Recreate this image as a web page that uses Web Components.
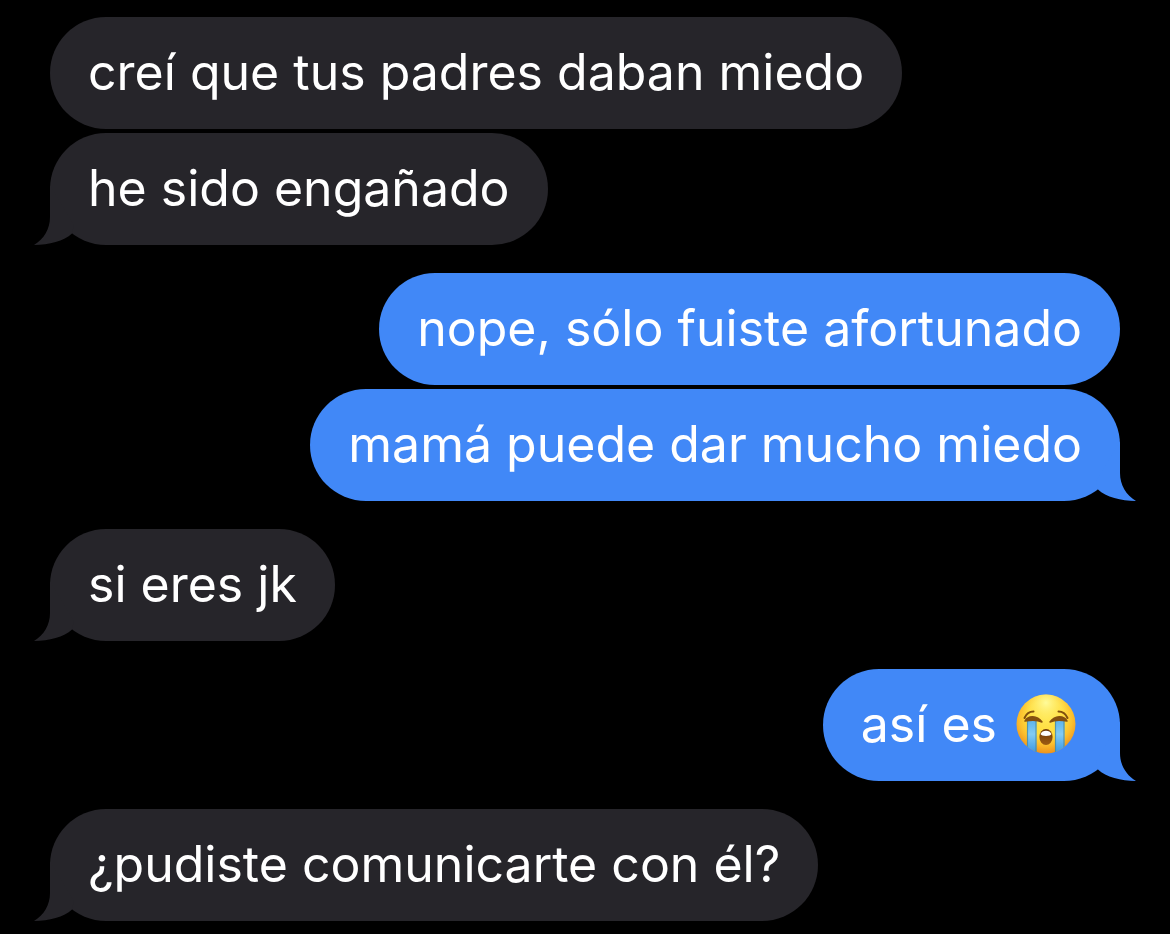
<!DOCTYPE html>
<html lang="es">
<head>
<meta charset="utf-8">
<meta name="viewport" content="width=device-width, initial-scale=1">
<title>Mensajes</title>
<style>
  body { margin: 0; background: #000; color: #fff; font-family: Inter, "Liberation Sans", sans-serif; }
</style>
</head>
<body>
<chat-thread>
  <message-group from="them">
    <message-bubble>creí que tus padres daban miedo</message-bubble>
    <message-bubble tail>he sido engañado</message-bubble>
  </message-group>
  <message-group from="me">
    <message-bubble>nope, sólo fuiste afortunado</message-bubble>
    <message-bubble tail>mamá puede dar mucho miedo</message-bubble>
  </message-group>
  <message-group from="them">
    <message-bubble tail>si eres jk</message-bubble>
  </message-group>
  <message-group from="me">
    <message-bubble tail>así es <crying-emoji></crying-emoji></message-bubble>
  </message-group>
  <message-group from="them">
    <message-bubble tail>¿pudiste comunicarte con él?</message-bubble>
  </message-group>
</chat-thread>

<template id="thread-template">
  <style>
    :host { display: block; }
    main { display: flex; flex-direction: column; gap: 28px; padding: 17px 50px 13px; }
  </style>
  <main><slot></slot></main>
</template>

<template id="group-template">
  <style>
    :host { display: flex; flex-direction: column; align-items: flex-start; gap: 4px; --bubble: #26252a; --flip: 1; --tail-left: -16px; --tail-right: auto; }
    :host([from="me"]) { align-items: flex-end; --bubble: #4188f7; --flip: -1; --tail-left: auto; --tail-right: -16px; }
  </style>
  <slot></slot>
</template>

<template id="bubble-template">
  <style>
    :host { display: block; position: relative; box-sizing: border-box; max-width: 100%; padding: 23px 38px 25px; border-radius: 56px; background: var(--bubble); font-size: 50px; line-height: 64px; }
    svg { display: none; position: absolute; bottom: 0; left: var(--tail-left); right: var(--tail-right); transform: scaleX(var(--flip)); fill: var(--bubble); }
    :host([tail]) svg { display: block; }
  </style>
  <slot></slot>
  <svg width="40" height="60" viewBox="0 0 40 60" aria-hidden="true"><path d="M16 0V32C16 44 10 54 0 60C15 60 30 56 38 48.5L40 40Z"/></svg>
</template>

<template id="emoji-template">
  <style>
    :host { display: inline-block; width: 60px; height: 60px; margin: 0 6px 0 5px; line-height: 0; vertical-align: -12px; }
  </style>
  <svg width="60" height="60" viewBox="0 0 60 60" role="img" aria-label="cara llorando a mares">
    <defs>
      <radialGradient id="face" cx=".5" cy=".4" r=".62">
        <stop offset="0" stop-color="#ffe650"/><stop offset=".5" stop-color="#ffdc3e"/><stop offset=".72" stop-color="#fcc02e"/><stop offset="1" stop-color="#ec8c1a"/>
      </radialGradient>
      <radialGradient id="shine" cx=".5" cy=".14" r=".42">
        <stop offset="0" stop-color="#fffb9a"/><stop offset="1" stop-color="#ffe650" stop-opacity="0"/>
      </radialGradient>
      <linearGradient id="tear" x2="0" y2="1">
        <stop offset="0" stop-color="#5fb4ec"/><stop offset=".4" stop-color="#82cbf5"/><stop offset="1" stop-color="#3594e4"/>
      </linearGradient>
      <linearGradient id="mouth" x2="0" y2="1">
        <stop offset="0" stop-color="#6b3607"/><stop offset="1" stop-color="#9d5c13"/>
      </linearGradient>
      <clipPath id="disc"><circle cx="30" cy="30" r="29.500"/></clipPath>
    </defs>
    <circle cx="30" cy="30" r="29.500" fill="url(#face)"/>
    <circle cx="30" cy="30" r="29.500" fill="url(#shine)"/>
    <g clip-path="url(#disc)">
      <path d="M11 27H20.500V60H11ZM39 27H48.500V60H39Z" fill="url(#tear)"/>
      <path d="M11.500 27V60M20 27V60M39.500 27V60M48 27V60" stroke="#4a8796" stroke-width="1.200" opacity=".75"/>
    </g>
    <path d="M9 27C12 21.500 21 21 26 28C21 25.500 14 26 9 27ZM34 28C39 21 48 21.500 51 27C46 26 39 25.500 34 28Z" fill="#845010" stroke="#845010" stroke-width="1.500" stroke-linejoin="round"/>
    <path d="M8.500 24C10 20.500 13.500 17.500 17.500 17.500M42.500 17.500C46.500 17.500 50 20.500 51.500 24" fill="none" stroke="#80500f" stroke-width="2" stroke-linecap="round"/>
    <ellipse cx="30" cy="43" rx="6.600" ry="8" fill="url(#mouth)"/>
    <path d="M24.500 40C26 35.500 34 35.500 35.500 40C35 42.500 25 42.500 24.500 40Z" fill="#fff"/>
  </svg>
</template>

<script>
  function define(name, templateId) {
    customElements.define(name, class extends HTMLElement {
      constructor() {
        super();
        this.attachShadow({ mode: "open" })
          .append(document.getElementById(templateId).content.cloneNode(true));
      }
    });
  }
  define("chat-thread", "thread-template");
  define("message-group", "group-template");
  define("message-bubble", "bubble-template");
  define("crying-emoji", "emoji-template");
</script>
</body>
</html>
